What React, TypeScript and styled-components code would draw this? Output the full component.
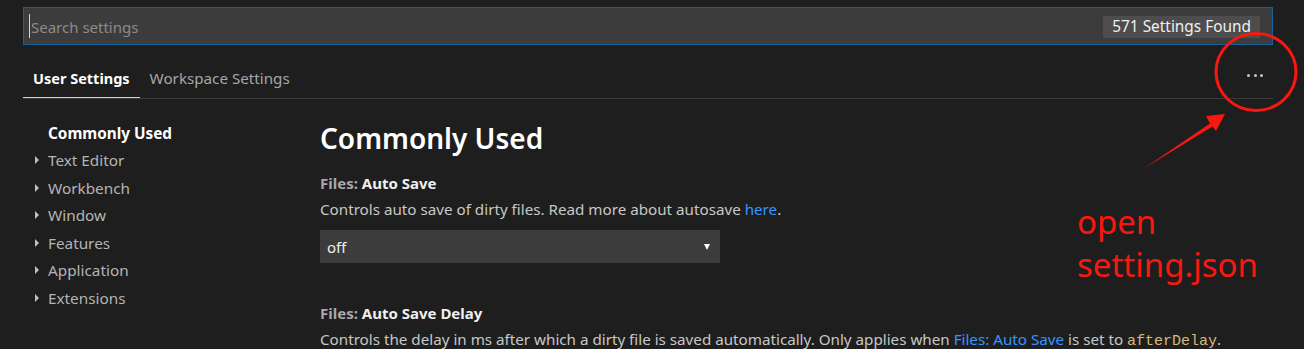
import styled, { createGlobalStyle } from 'styled-components'

const GlobalStyle = createGlobalStyle`
  html, body {
    margin: 0;
    padding: 0;
    background: #1e1e1e;
  }
  body {
    font-family: 'Noto Sans', 'Open Sans', sans-serif;
    color: #cccccc;
    overflow: hidden;
  }
`

const navItems = ['Text Editor', 'Workbench', 'Window', 'Features', 'Application', 'Extensions']

function App() {
  return (
    <>
      <GlobalStyle />
      <Page>
        <SearchBox>
          <Caret />
          <Placeholder>Search settings</Placeholder>
          <CountBadge>571 Settings Found</CountBadge>
        </SearchBox>

        <TabBar>
          <Tab $active>User Settings</Tab>
          <Tab>Workspace Settings</Tab>
          <MoreButton>
            <Dot />
            <Dot />
            <Dot />
          </MoreButton>
        </TabBar>

        <Body>
          <Sidebar>
            <NavItem $active>Commonly Used</NavItem>
            {navItems.map((item) => (
              <NavItem key={item}>
                <Twistie />
                {item}
              </NavItem>
            ))}
          </Sidebar>

          <Content>
            <Heading>Commonly Used</Heading>

            <SettingTitle>
              <Category>Files: </Category>Auto Save
            </SettingTitle>
            <Description>
              Controls auto save of dirty files. Read more about autosave <Link>here</Link>.
            </Description>
            <Select>
              off
              <SelectArrow />
            </Select>

            <SettingTitle $spaced>
              <Category>Files: </Category>Auto Save Delay
            </SettingTitle>
            <Description>
              Controls the delay in ms after which a dirty file is saved automatically. Only applies when{' '}
              <Link>Files: Auto Save</Link> is set to <Code>afterDelay</Code>.
            </Description>
          </Content>
        </Body>

        <Annotation>
          <svg width="1304" height="349" viewBox="0 0 1304 349">
            <ellipse cx="1256" cy="72" rx="40" ry="38.5" fill="none" stroke="#f8180f" strokeWidth="3" />
            <polygon
              points="1143,169 1210,123.5 1206,116 1225,114 1216,131 1212.5,126.5"
              fill="#f8180f"
            />
          </svg>
          <NoteText>
            open
            <br />
            setting.json
          </NoteText>
        </Annotation>
      </Page>
    </>
  )
}

const Page = styled.div`
  position: relative;
  width: 1304px;
  height: 349px;
  padding: 7px 31px 0 23px;
  box-sizing: border-box;
  overflow: hidden;
`

const SearchBox = styled.div`
  height: 38px;
  box-sizing: border-box;
  border: 1px solid #0e639c;
  background: #3c3c3c;
  display: flex;
  align-items: center;
  padding: 0 12px 0 5px;
`

const Caret = styled.div`
  width: 1px;
  height: 24px;
  background: #d4d4d4;
  margin-right: 1px;
`

const Placeholder = styled.span`
  flex: 1;
  font-size: 15px;
  color: #8b8b8b;
  padding-top: 2px;
`

const CountBadge = styled.span`
  background: #4d4d4d;
  color: #f0f0f0;
  font-size: 15.4px;
  line-height: 22px;
  padding: 0 9px;
  margin-top: 2px;
`

const TabBar = styled.div`
  margin-top: 13px;
  height: 40px;
  display: flex;
  align-items: stretch;
  border-bottom: 1px solid #3a3a3a;
`

const Tab = styled.div<{ $active?: boolean }>`
  display: flex;
  align-items: center;
  padding: 0 10px;
  font-size: ${({ $active }) => ($active ? '14.5px' : '15.2px')};
  font-weight: ${({ $active }) => ($active ? 700 : 400)};
  color: ${({ $active }) => ($active ? '#ffffff' : '#a6a6a6')};
  box-shadow: ${({ $active }) => ($active ? 'inset 0 -1px 0 #d0d0d0' : 'none')};
`

const MoreButton = styled.div`
  margin-left: auto;
  display: flex;
  align-items: center;
  gap: 3.5px;
  padding: 0 10px 6px 0;
`

const Dot = styled.span`
  width: 3px;
  height: 3px;
  border-radius: 50%;
  background: #c5c5c5;
`

const Body = styled.div`
  display: grid;
  grid-template-columns: 297px 1fr;
  padding-top: 19px;
`

const Sidebar = styled.div`
  display: flex;
  flex-direction: column;
  padding: 1px 0 0 12px;
`

const NavItem = styled.div<{ $active?: boolean }>`
  display: flex;
  align-items: center;
  height: 27.5px;
  padding-left: ${({ $active }) => ($active ? '13px' : '0')};
  font-size: 15.3px;
  font-weight: ${({ $active }) => ($active ? 700 : 400)};
  color: ${({ $active }) => ($active ? '#ffffff' : '#b4b4b4')};
`

const Twistie = styled.span`
  width: 0;
  height: 0;
  border-top: 4px solid transparent;
  border-bottom: 4px solid transparent;
  border-left: 4px solid #c0c0c0;
  margin-right: 9px;
`

const Content = styled.div`
  display: flex;
  flex-direction: column;
  align-items: flex-start;
`

const Heading = styled.h1`
  margin: 0;
  font-size: 28px;
  font-weight: 600;
  line-height: 40px;
  color: #ffffff;
`

const SettingTitle = styled.div<{ $spaced?: boolean }>`
  margin-top: ${({ $spaced }) => ($spaced ? '40px' : '15px')};
  font-size: 15px;
  font-weight: 700;
  line-height: 20px;
  color: #f0f0f0;
`

const Category = styled.span`
  color: #a8a8a8;
`

const Description = styled.div`
  margin-top: 6px;
  font-size: 15.2px;
  line-height: 20px;
  color: #c8c8c8;
  white-space: nowrap;
`

const Link = styled.span`
  color: #3794ff;
`

const Code = styled.span`
  font-family: 'Liberation Mono', 'DejaVu Sans Mono', monospace;
  font-size: 15px;
  color: #d7ba7d;
`

const Select = styled.div`
  margin-top: 11px;
  width: 400px;
  height: 33px;
  box-sizing: border-box;
  background: #3c3c3c;
  display: flex;
  align-items: center;
  justify-content: space-between;
  padding: 0 10px 0 7px;
  font-size: 15px;
  color: #f0f0f0;
`

const SelectArrow = styled.span`
  width: 0;
  height: 0;
  border-left: 3.5px solid transparent;
  border-right: 3.5px solid transparent;
  border-top: 6px solid #ffffff;
`

const Annotation = styled.div`
  position: absolute;
  inset: 0;
  pointer-events: none;

  svg {
    position: absolute;
    left: 0;
    top: 0;
  }
`

const NoteText = styled.div`
  position: absolute;
  left: 1077px;
  top: 200px;
  font-size: 33px;
  line-height: 43px;
  color: #f8180f;
`

export default App
